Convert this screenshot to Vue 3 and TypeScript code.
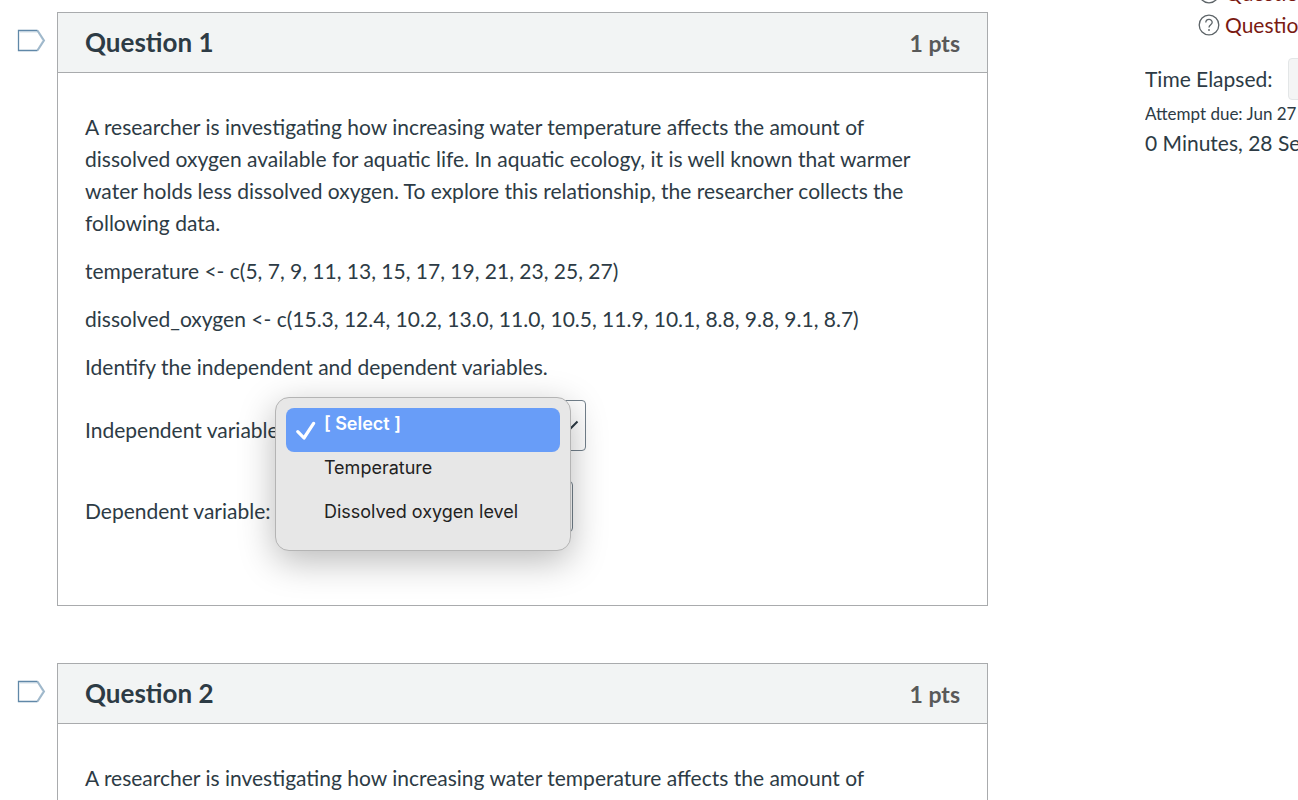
<script setup lang="ts">
import { ref } from 'vue'

const intro =
  'A researcher is investigating how increasing water temperature affects the amount of dissolved oxygen available for aquatic life. In aquatic ecology, it is well known that warmer water holds less dissolved oxygen. To explore this relationship, the researcher collects the following data.'

const questions = [
  {
    id: 1,
    paragraphs: [
      intro,
      'temperature <- c(5, 7, 9, 11, 13, 15, 17, 19, 21, 23, 25, 27)',
      'dissolved_oxygen <- c(15.3, 12.4, 10.2, 13.0, 11.0, 10.5, 11.9, 10.1, 8.8, 9.8, 9.1, 8.7)',
      'Identify the independent and dependent variables.',
    ],
    blanks: [
      { id: 'independent', label: 'Independent variable:', open: true },
      { id: 'dependent', label: 'Dependent variable:', open: false },
    ],
  },
  { id: 2, paragraphs: [intro], blanks: [] },
]

const options = ['[ Select ]', 'Temperature', 'Dissolved oxygen level']
const answers = ref<Record<string, string>>({
  independent: options[0],
  dependent: options[0],
})
const navigation = [1, 2]
</script>

<template>
  <div class="page">
    <main class="questions">
      <section v-for="q in questions" :key="q.id" class="question">
        <button class="flag" type="button" :aria-label="`Flag question ${q.id}`">
          <svg width="29" height="23" viewBox="0 0 29 23" fill="none">
            <path d="M3 3H20.6L25.8 11.5L20.6 20" stroke="#d3dfe8" stroke-width="1" />
            <path d="M20.5 1.5L27 11.5L20.5 21.5" stroke="#9fb8cb" stroke-width="2" />
            <path d="M20.5 1.5H1.5V21.5H20.5" stroke="#6088a8" stroke-width="1.3" />
          </svg>
        </button>
        <header class="head">
          <h2>Question {{ q.id }}</h2>
          <span class="points">1 pts</span>
        </header>
        <div class="body">
          <p v-for="text in q.paragraphs" :key="text">{{ text }}</p>
          <div v-for="blank in q.blanks" :key="blank.id" class="blank">
            <label :for="blank.id">{{ blank.label }}</label>
            <div class="field">
              <select :id="blank.id" v-model="answers[blank.id]">
                <option v-for="o in options" :key="o">{{ o }}</option>
              </select>
              <svg class="chevron" width="20" height="12" viewBox="0 0 20 12" fill="none">
                <path d="M1.5 1.5L10 10L18.5 1.5" stroke="#2d3b45" stroke-width="2" />
              </svg>
              <div v-if="blank.open" class="menu" role="listbox" :aria-label="blank.label">
                <button
                  v-for="o in options"
                  :key="o"
                  type="button"
                  role="option"
                  class="option"
                  :class="{ selected: answers[blank.id] === o }"
                  :aria-selected="answers[blank.id] === o"
                  @click="answers[blank.id] = o"
                >
                  <svg v-if="answers[blank.id] === o" class="check" width="20" height="20" viewBox="0 0 20 20" fill="none">
                    <path d="M1.8 10.6L8 17L17.6 2.4" stroke="#fff" stroke-width="3.2" stroke-linecap="round" stroke-linejoin="round" />
                  </svg>
                  {{ o }}
                </button>
              </div>
            </div>
          </div>
        </div>
      </section>
    </main>
    <aside class="sidebar">
      <ul>
        <li v-for="n in navigation" :key="n">
          <svg width="22" height="22" viewBox="0 0 22 22" fill="none" stroke="#5d6468">
            <circle cx="11" cy="11" r="9.8" stroke-width="1.3" />
            <path d="M7.8 8.6C7.8 4.4 14.2 4.5 14.2 8.3C14.2 10.8 11 10.7 11 13.5" stroke-width="1.3" />
            <circle cx="11" cy="16" r="0.9" fill="#5d6468" stroke="none" />
          </svg>
          <a href="#">Question {{ n }}</a>
        </li>
      </ul>
      <div class="elapsed">
        <span>Time Elapsed:</span>
        <button type="button" class="hide" aria-label="Hide time"></button>
      </div>
      <div class="due">Attempt due: Jun 27</div>
      <div class="time">0 Minutes, 28 Seconds</div>
    </aside>
  </div>
</template>

<style>
body {
  margin: 0;
  background: #fff;
}
</style>

<style scoped>
.page {
  display: flex;
  height: 100vh;
  overflow: hidden;
  color: #2d3b45;
  font: 21px/32px Lato, "Liberation Sans", sans-serif;
}
.questions {
  flex: 1;
  min-width: 0;
  padding: 12px 157px 0 57px;
}
.question {
  position: relative;
  margin-bottom: 57px;
  border: 1px solid #a9abad;
}
.flag {
  position: absolute;
  top: 16px;
  left: -41px;
  display: flex;
  padding: 0;
  border: 0;
  background: none;
}
.head {
  display: flex;
  align-items: center;
  justify-content: space-between;
  height: 59px;
  padding: 0 27px;
  border-bottom: 1px solid #a9abad;
  background: #f2f4f4;
}
h2 {
  margin: 0 0 2px;
  font-size: 26px;
  font-weight: 700;
}
.points {
  color: #595959;
  font-size: 23px;
  font-weight: 700;
}
.body {
  padding: 38px 40px 44px 27px;
}
p {
  margin: 0 0 16px;
}
.blank {
  display: flex;
  gap: 7px;
  margin-bottom: 29px;
  padding-top: 1px;
}
.blank label {
  padding-top: 14px;
}
.field {
  position: relative;
}
select {
  display: block;
  width: 295px;
  height: 51px;
  padding: 0 16px;
  border: 1px solid #73818c;
  border-radius: 4px;
  appearance: none;
  background: #fff;
  color: #2d3b45;
  font: inherit;
}
.chevron {
  position: absolute;
  top: 20px;
  right: 7px;
}
.menu {
  position: absolute;
  z-index: 1;
  top: -3px;
  right: 15px;
  box-sizing: border-box;
  width: 296px;
  padding: 10px;
  border: 1px solid #b4b4b4;
  border-radius: 14px;
  background: #e7e7e7;
  box-shadow: 0 10px 36px rgba(0, 0, 0, 0.28);
}
.option {
  position: relative;
  display: block;
  width: 100%;
  height: 44px;
  padding: 0 0 12px 38px;
  border: 0;
  border-radius: 8px;
  background: none;
  color: #222;
  font: 18px/32px Inter, "Liberation Sans", sans-serif;
  text-align: left;
  white-space: nowrap;
}
.option.selected {
  background: #689df8;
  color: #fff;
  font-weight: 600;
}
.check {
  position: absolute;
  top: 13px;
  left: 10px;
}
.sidebar {
  flex: none;
  width: 153px;
  margin-top: -23px;
  overflow: hidden;
  white-space: nowrap;
}
ul {
  margin: 0;
  padding: 0 0 0 53px;
  list-style: none;
}
li {
  display: flex;
  align-items: center;
  gap: 5px;
  height: 32px;
}
li svg {
  flex: none;
}
a {
  color: #7a1a12;
  text-decoration: none;
}
.elapsed {
  display: flex;
  align-items: center;
  gap: 15px;
  margin-top: 17px;
}
.hide {
  flex: none;
  width: 120px;
  height: 42px;
  border: 1px solid #e3e6e7;
  border-radius: 4px;
  background: #f4f5f5;
}
.due {
  font-size: 17px;
  line-height: 28px;
}
.time {
  line-height: 30px;
}
</style>
